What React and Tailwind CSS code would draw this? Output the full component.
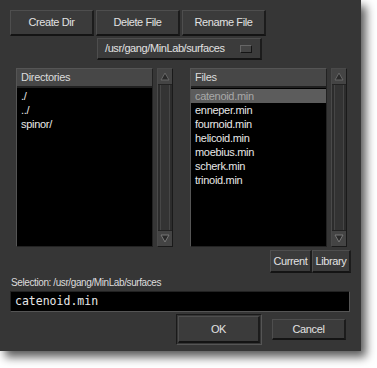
import React from "react";

const font = { fontFamily: '"Liberation Sans", Arial, sans-serif' };

const Btn = ({ children, className = "" }) => (
  <div
    className={
      "flex items-center justify-center bg-[#3b3b3b] text-[#e2e2e2] text-[11px] tracking-[-0.4px] border-t border-l border-t-[#4e4e4e] border-l-[#4e4e4e] border-b-2 border-r-2 border-b-[#141414] border-r-[#1c1c1c] " +
      className
    }
  >
    {children}
  </div>
);

const ScrollBar = () => (
  <div className="w-[16px] h-full flex flex-col bg-[#2c2c2c] border border-[#1a1a1a] border-t-[#4a4a4a] border-l-[#4a4a4a]">
    <div className="h-[16px] bg-[#444] flex items-center justify-center border-b border-[#222]">
      <svg width="10" height="9" viewBox="0 0 10 9">
        <polygon points="5,1 9,8 1,8" fill="#2a2a2a" stroke="#666" strokeWidth="1" />
      </svg>
    </div>
    <div className="flex-1 mx-[2px] border-x border-[#464646] bg-[#333]" />
    <div className="h-[16px] bg-[#444] flex items-center justify-center border-t border-[#222]">
      <svg width="10" height="9" viewBox="0 0 10 9">
        <polygon points="1,1 9,1 5,8" fill="#2a2a2a" stroke="#777" strokeWidth="1" />
      </svg>
    </div>
  </div>
);

const ListPanel = ({ title, items, selected }) => (
  <div className="flex h-[179px] gap-[4px]">
    <div className="flex flex-col h-full w-[137px] bg-black border border-[#555] border-r-[#222] border-b-[#222]">
      <div className="h-[19px] bg-[#474747] border-b-2 border-[#202020] flex items-center pl-[4px] text-[11px] tracking-[-0.3px] text-[#dcdcdc]">
        {title}
      </div>
      <div className="flex flex-col pt-[1px]">
        {items.map((it, i) => (
          <div
            key={it}
            className={
              "h-[14px] leading-[14px] pl-[4px] text-[11px] tracking-[-0.3px] " +
              (i === selected ? "bg-[#5c5c5c] text-[#a8a8a8]" : "text-[#e8e8e8]")
            }
          >
            {it}
          </div>
        ))}
      </div>
    </div>
    <ScrollBar />
  </div>
);

export default function App() {
  return (
    <div className="w-[377px] h-[368px] bg-white" style={font}>
      <div className="w-[361px] h-[351px] bg-[#363636] shadow-[5px_6px_9px_rgba(0,0,0,0.65)] flex flex-col pl-[10px] pt-[10px]">
        <div className="flex gap-[2px]">
          <Btn className="w-[84px] h-[26px]">Create Dir</Btn>
          <Btn className="w-[84px] h-[26px]">Delete File</Btn>
          <Btn className="w-[84px] h-[26px]">Rename File</Btn>
        </div>
        <div className="ml-[87px] mt-[2px] w-[165px] h-[22px] flex items-center bg-[#3b3b3b] border-t border-l border-[#4e4e4e] border-b-2 border-r-2 border-b-[#141414] border-r-[#1c1c1c] text-[11px] tracking-[-0.4px] text-[#e2e2e2] pl-[7px]">
          <span className="flex-1">/usr/gang/MinLab/surfaces</span>
          <div className="w-[12px] h-[8px] mr-[8px] bg-[#444] border border-[#666] border-b-[#151515] border-r-[#151515]" />
        </div>
        <div className="flex mt-[8px] ml-[6px] gap-[17px]">
          <ListPanel title="Directories" items={["./", "../", "spinor/"]} selected={-1} />
          <ListPanel
            title="Files"
            items={["catenoid.min", "enneper.min", "fournoid.min", "helicoid.min", "moebius.min", "scherk.min", "trinoid.min"]}
            selected={0}
          />
        </div>
        <div className="flex ml-[260px] mt-[3px]">
          <Btn className="w-[42px] h-[23px]">Current</Btn>
          <Btn className="w-[39px] h-[23px]">Library</Btn>
        </div>
        <div className="mt-[2px] ml-[1px] text-[10px] tracking-[-0.4px] text-[#dcdcdc] h-[15px] leading-[15px]">
          Selection: /usr/gang/MinLab/surfaces
        </div>
        <div
          className="mt-[1px] w-[340px] h-[21px] bg-black border border-[#222] border-b-[#555] border-r-[#555] flex items-center pl-[4px] text-[11.5px] text-[#e8e8e8]"
          style={{ fontFamily: '"DejaVu Sans Mono", "Liberation Mono", monospace' }}
        >
          catenoid.min
        </div>
        <div className="flex mt-[2px] ml-[166px] items-center">
          <div className="w-[86px] h-[31px] border border-[#1a1a1a] border-b-[#555] border-r-[#555] p-[1px]">
            <Btn className="w-full h-full">OK</Btn>
          </div>
          <Btn className="ml-[10px] w-[74px] h-[21px]">Cancel</Btn>
        </div>
      </div>
    </div>
  );
}
